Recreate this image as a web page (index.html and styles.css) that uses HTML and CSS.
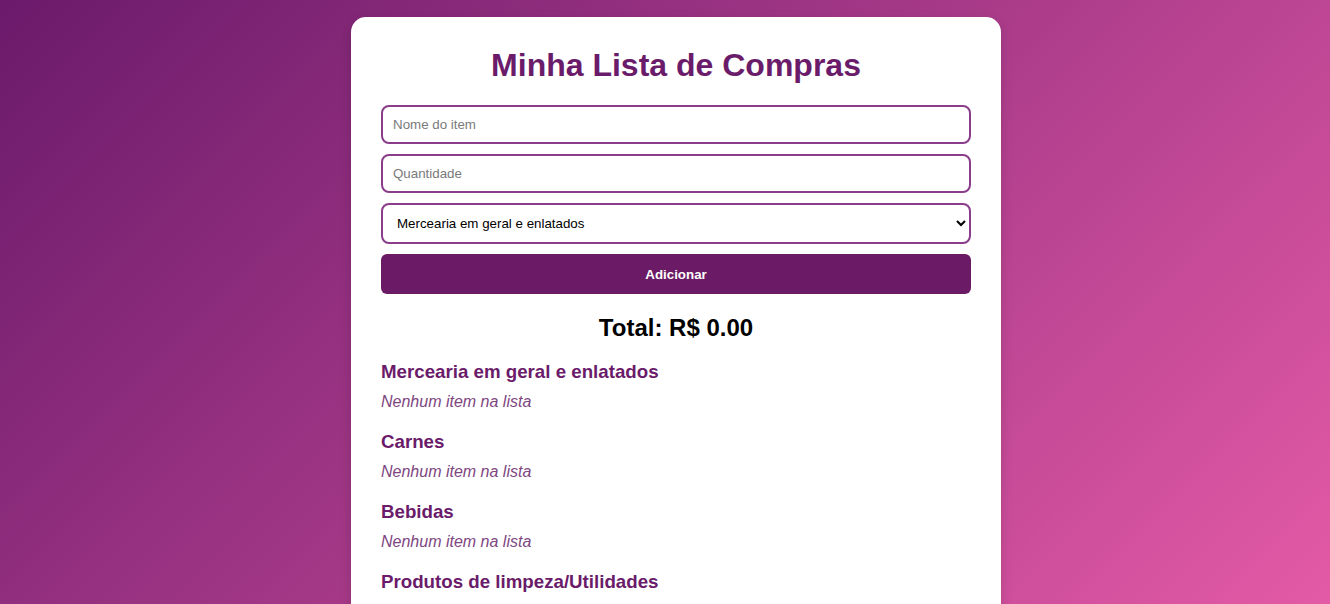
FILE: index.html
```html
<!DOCTYPE html>
<html lang="pt-BR">
<head>
<meta charset="utf-8">
<title>Minha Lista de Compras</title>
<link rel="stylesheet" href="styles.css">
</head>
<body>
<main class="card">
  <h1 class="title">Minha Lista de Compras</h1>
  <form class="form">
    <input class="field" type="text" placeholder="Nome do item">
    <input class="field" type="text" placeholder="Quantidade">
    <select class="field select">
      <option>Mercearia em geral e enlatados</option>
      <option>Carnes</option>
      <option>Bebidas</option>
      <option>Produtos de limpeza/Utilidades</option>
    </select>
    <button class="btn" type="button">Adicionar</button>
  </form>
  <h2 class="total">Total: R$ 0.00</h2>
  <section class="category">
    <h3 class="cat-title">Mercearia em geral e enlatados</h3>
    <p class="empty">Nenhum item na lista</p>
  </section>
  <section class="category">
    <h3 class="cat-title">Carnes</h3>
    <p class="empty">Nenhum item na lista</p>
  </section>
  <section class="category">
    <h3 class="cat-title">Bebidas</h3>
    <p class="empty">Nenhum item na lista</p>
  </section>
  <section class="category">
    <h3 class="cat-title">Produtos de limpeza/Utilidades</h3>
    <p class="empty">Nenhum item na lista</p>
  </section>
</main>
</body>
</html>
```
FILE: styles.css
```css
html {
  min-height: 100%;
}
body {
  margin: 0;
  padding: 17px 0 20px 22px;
  font-family: "Liberation Sans", Arial, sans-serif;
  background: linear-gradient(135deg, #6b1a6b 0%, #e35aa6 100%) fixed;
  display: flex;
  justify-content: center;
}
.card {
  box-sizing: border-box;
  width: 650px;
  background: #ffffff;
  border-radius: 15px;
  padding: 30px 30px 20px;
  box-shadow: 0 4px 12px rgba(0, 0, 0, 0.15);
}
.title {
  margin: 0 0 21px;
  text-align: center;
  color: #6a1b6a;
  font-size: 32px;
  font-weight: bold;
}
.form {
  display: flex;
  flex-direction: column;
  gap: 10px;
}
.field {
  box-sizing: border-box;
  width: 100%;
  height: 39px;
  padding: 10px;
  border: 2px solid #8a3d8a;
  border-radius: 8px;
  font-family: "Liberation Sans", Arial, sans-serif;
  font-size: 13.33px;
  color: #000;
  background: #fff;
  outline: none;
}
.field::placeholder {
  color: #7a7a7a;
}
.select {
  height: 41px;
  padding: 0 10px;
}
.btn {
  height: 40px;
  border: none;
  border-radius: 6px;
  background: #6b1a65;
  color: #fff;
  font-family: "Liberation Sans", Arial, sans-serif;
  font-size: 13.33px;
  font-weight: bold;
  cursor: pointer;
}
.total {
  margin: 20px 0 19px;
  text-align: center;
  font-size: 24px;
  font-weight: bold;
  color: #000;
}
.category {
  margin-bottom: 20px;
}
.cat-title {
  margin: 0 0 10px;
  font-size: 18.72px;
  font-weight: bold;
  color: #6a1b6a;
}
.empty {
  margin: 0;
  font-size: 16px;
  font-style: italic;
  color: #7e4680;
}
```
